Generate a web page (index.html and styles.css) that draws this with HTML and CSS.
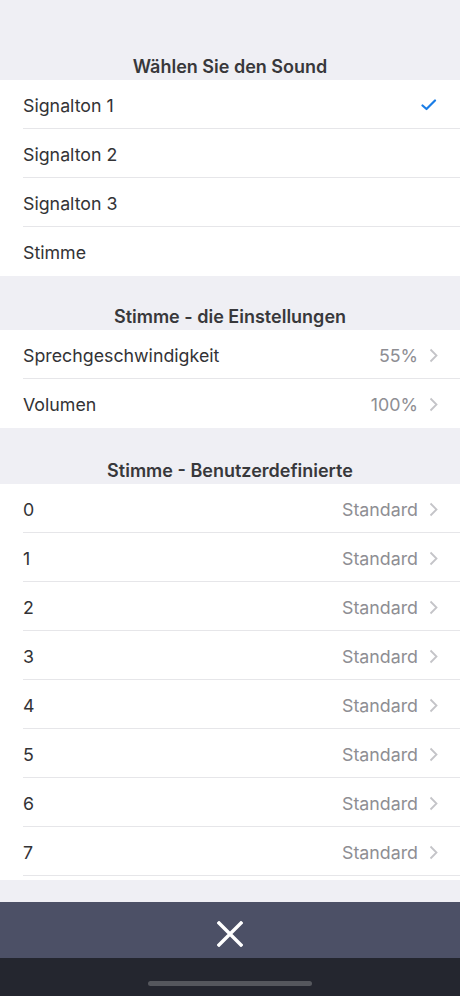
FILE: index.html
```html
<!DOCTYPE html>
<html>

<head>
    <meta charset="UTF-8">
    <meta name="viewport" content="width=device-width, initial-scale=1.0" />
    <title>Sound</title>
    <link rel="stylesheet" href="styles.css">
</head>

<body>
    <div class="page">
        <div class="section-title first">Wählen Sie den Sound</div>
        <div class="group">
            <div class="row"><span class="label">Signalton 1</span>
                <svg class="check" width="16" height="12" viewBox="0 0 16 12"><path d="M1.5 6.5 L5.5 10 L14 1.5" fill="none" stroke="#1a7de6" stroke-width="2.2" stroke-linecap="round" stroke-linejoin="round"/></svg>
            </div>
            <div class="row"><span class="label">Signalton 2</span></div>
            <div class="row"><span class="label">Signalton 3</span></div>
            <div class="row last"><span class="label">Stimme</span></div>
        </div>

        <div class="section-title">Stimme - die Einstellungen</div>
        <div class="group">
            <div class="row"><span class="label">Sprechgeschwindigkeit</span><span class="value">55%</span><svg class="chev" width="9" height="15" viewBox="0 0 9 15"><path d="M1.5 1.5 L7.5 7.5 L1.5 13.5" /></svg></div>
            <div class="row last"><span class="label">Volumen</span><span class="value">100%</span><svg class="chev" width="9" height="15" viewBox="0 0 9 15"><path d="M1.5 1.5 L7.5 7.5 L1.5 13.5" /></svg></div>
        </div>

        <div class="section-title wide">Stimme - Benutzerdefinierte</div>
        <div class="group tail">
            <div class="row"><span class="label">0</span><span class="value">Standard</span><svg class="chev" width="9" height="15" viewBox="0 0 9 15"><path d="M1.5 1.5 L7.5 7.5 L1.5 13.5" /></svg></div>
            <div class="row"><span class="label">1</span><span class="value">Standard</span><svg class="chev" width="9" height="15" viewBox="0 0 9 15"><path d="M1.5 1.5 L7.5 7.5 L1.5 13.5" /></svg></div>
            <div class="row"><span class="label">2</span><span class="value">Standard</span><svg class="chev" width="9" height="15" viewBox="0 0 9 15"><path d="M1.5 1.5 L7.5 7.5 L1.5 13.5" /></svg></div>
            <div class="row"><span class="label">3</span><span class="value">Standard</span><svg class="chev" width="9" height="15" viewBox="0 0 9 15"><path d="M1.5 1.5 L7.5 7.5 L1.5 13.5" /></svg></div>
            <div class="row"><span class="label">4</span><span class="value">Standard</span><svg class="chev" width="9" height="15" viewBox="0 0 9 15"><path d="M1.5 1.5 L7.5 7.5 L1.5 13.5" /></svg></div>
            <div class="row"><span class="label">5</span><span class="value">Standard</span><svg class="chev" width="9" height="15" viewBox="0 0 9 15"><path d="M1.5 1.5 L7.5 7.5 L1.5 13.5" /></svg></div>
            <div class="row"><span class="label">6</span><span class="value">Standard</span><svg class="chev" width="9" height="15" viewBox="0 0 9 15"><path d="M1.5 1.5 L7.5 7.5 L1.5 13.5" /></svg></div>
            <div class="row"><span class="label">7</span><span class="value">Standard</span><svg class="chev" width="9" height="15" viewBox="0 0 9 15"><path d="M1.5 1.5 L7.5 7.5 L1.5 13.5" /></svg></div>
        </div>
        <div class="spacer"></div>
    </div>

    <div class="toolbar">
        <svg width="26" height="26" viewBox="0 0 26 26"><path d="M2 2 L24 24 M24 2 L2 24" stroke="#fff" stroke-width="3.4" stroke-linecap="square"/></svg>
    </div>
    <div class="home">
        <div class="indicator"></div>
    </div>
</body>

</html>
```

FILE: styles.css
```css
body {
    margin: 0;
    background-color: #efeff4;
    font-family: Inter, "Liberation Sans", Arial, sans-serif;
    color: #333336;
}

.page {
    background-color: #efeff4;
}

.section-title {
    height: 54px;
    box-sizing: border-box;
    padding-bottom: 3px;
    display: flex;
    align-items: flex-end;
    justify-content: center;
    font-size: 18px;
    font-weight: 600;
    color: #38383b;
}

.section-title.first {
    height: 80px;
}

.section-title.wide {
    height: 56px;
}

.group {
    background-color: #fff;
    padding-left: 23px;
}

.group.tail {
    padding-bottom: 4px;
}

.row {
    height: 49px;
    box-sizing: border-box;
    border-bottom: 1px solid #e6e6e9;
    display: flex;
    align-items: center;
    padding: 2px 22px 0 0;
    font-size: 17.8px;
}

.row.last {
    border-bottom: none;
}

.label {
    flex: 1;
}

.value {
    color: #8e8e93;
}

.chev {
    margin-left: 11px;
    fill: none;
    stroke: #c4c4c8;
    stroke-width: 1.8;
}

.check {
    margin-right: 1px;
}

.spacer {
    height: 22px;
}

.toolbar {
    height: 56px;
    box-sizing: border-box;
    padding-top: 8px;
    background-color: #4c5066;
    display: flex;
    align-items: center;
    justify-content: center;
}

.home {
    height: 38px;
    background-color: #24262f;
    display: flex;
    justify-content: center;
    padding-top: 23px;
    box-sizing: border-box;
}

.indicator {
    width: 164px;
    height: 5px;
    border-radius: 3px;
    background-color: #55575d;
}
```
